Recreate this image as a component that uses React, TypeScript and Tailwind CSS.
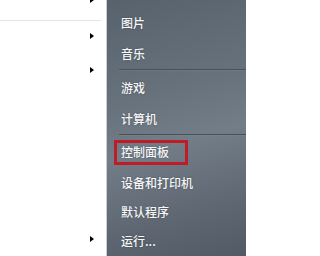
import React from "react";

const Arrow = ({ className = "" }: { className?: string }) => (
  <div className={`w-0 h-0 border-y-[3.5px] border-y-transparent border-l-[4px] border-l-black ${className}`} />
);

const Item = ({ label, h }: { label: string; h: string }) => (
  <div className={`${h} flex items-center pl-[14px] text-[12px] font-medium text-[#f5f6f8] [text-shadow:0_0_2px_rgba(0,0,0,0.3)]`}>
    {label}
  </div>
);

const Sep = () => (
  <div className="ml-[12px] flex flex-col">
    <div className="h-px bg-[#48505a]" />
    <div className="h-px bg-[#7d8690]/40" />
  </div>
);

export default function App() {
  return (
    <div
      className="w-[246px] h-[256px] flex overflow-hidden bg-white"
      style={{ fontFamily: '"Noto Sans CJK SC", "Microsoft YaHei", sans-serif' }}
    >
      {/* left white column */}
      <div className="w-[106px] shrink-0 flex flex-col">
        <div className="h-[20px] flex justify-end pr-[12px]">
          <Arrow className="-mt-[3px]" />
        </div>
        <div className="h-px w-[101px] bg-[#e4e4e4]" />
        <div className="h-[30px] flex items-center justify-end pr-[12px]">
          <Arrow />
        </div>
        <div className="h-[40px] flex items-center justify-end pr-[12px]">
          <Arrow />
        </div>
        <div className="h-[133px]" />
        <div className="h-[34px] flex items-center justify-end pr-[12px]">
          <Arrow />
        </div>
      </div>
      {/* right dark panel */}
      <div className="flex-1 flex">
        <div className="w-px bg-[#c9ced3]" />
        <div className="flex-1 flex flex-col pt-[7px] bg-[linear-gradient(165deg,#58626c_0%,#67717b_35%,#737d87_55%,#5f6872_80%,#525b65_100%)]">
          <Item label="图片" h="h-[32px]" />
          <Item label="音乐" h="h-[32px]" />
          <Sep />
          <Item label="游戏" h="h-[33px]" />
          <Item label="计算机" h="h-[31px]" />
          <Sep />
          <div className="h-[33px] pt-[4px] pl-[7px]">
            <div className="w-[74px] h-[25px] border-[3px] border-[#c01c27] flex items-center pl-[4px] text-[12px] font-medium text-[#f5f6f8] [text-shadow:0_0_2px_rgba(0,0,0,0.3)]">
              控制面板
            </div>
          </div>
          <Item label="设备和打印机" h="h-[30px]" />
          <Item label="默认程序" h="h-[30px]" />
          <Item label="运行..." h="h-[30px]" />
        </div>
      </div>
    </div>
  );
}
